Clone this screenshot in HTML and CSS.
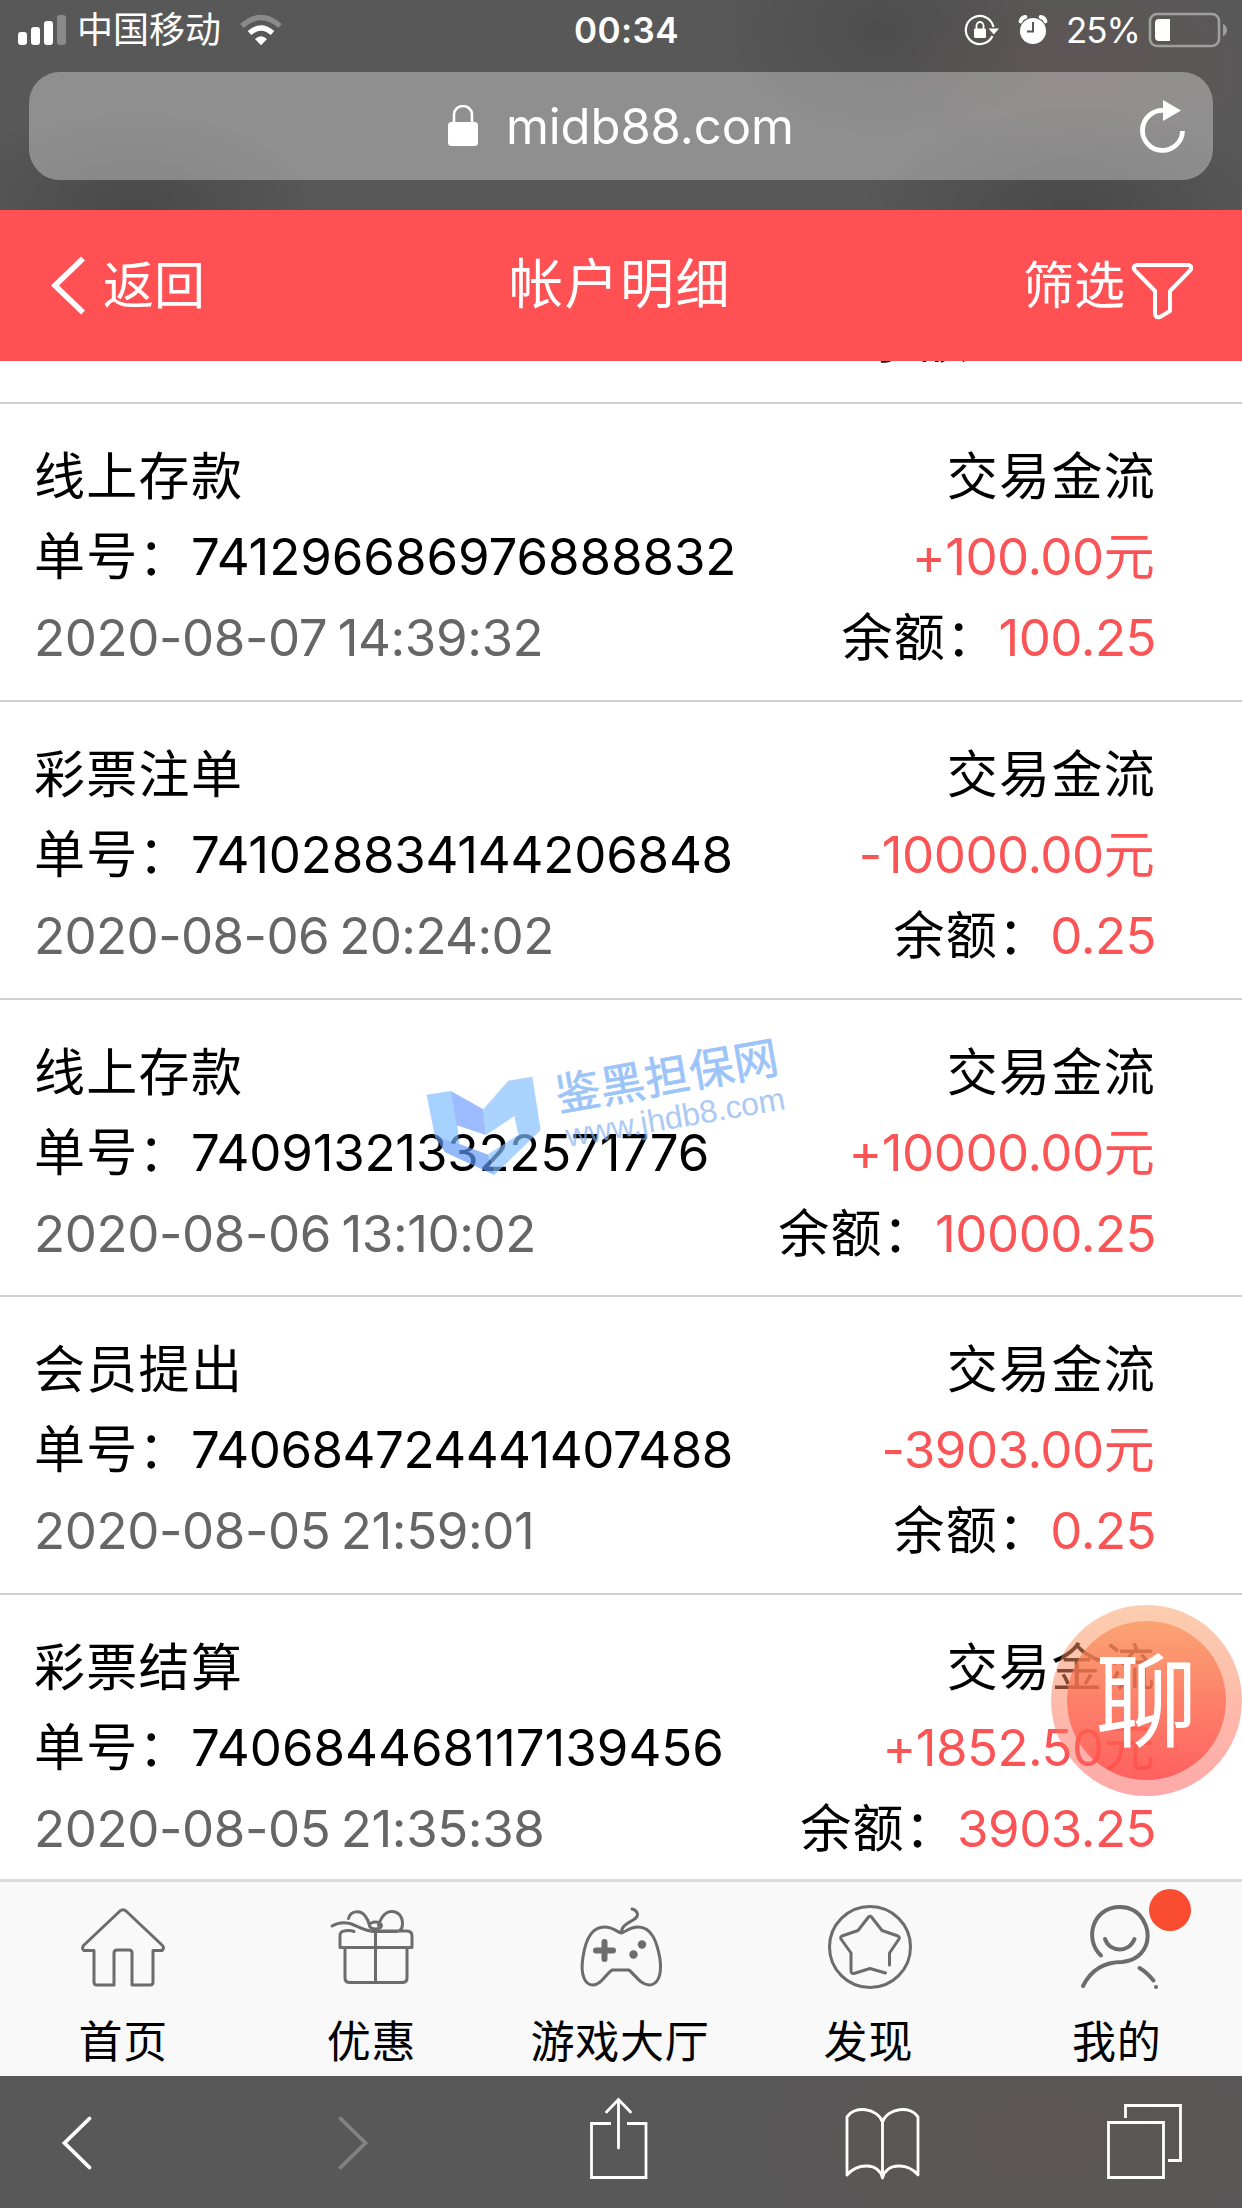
FILE: index.html
```html
<!DOCTYPE html>
<html lang="zh-CN">
<head>
<meta charset="utf-8">
<title>帐户明细</title>
<link rel="stylesheet" href="styles.css">
</head>
<body>
<div class="phone">
  <div class="browser-top">
    <div class="status">
      <div class="status-left">
        <svg width="49" height="32" viewBox="18 14 49 32"><g fill="#fff"><rect x="18" y="32" width="9" height="13" rx="3"/><rect x="31" y="27" width="9" height="18" rx="3"/><rect x="44" y="21" width="9" height="24" rx="3"/><rect x="57" y="15" width="9" height="30" rx="3" opacity=".3"/></g></svg>
        <span class="carrier">中国移动</span>
        <svg class="wifi" width="44" height="32" viewBox="239 14 44 32"><g fill="none" stroke="#fff" stroke-width="5.4"><path d="M242 26Q261 9 280 26" opacity=".3"/><path d="M249.500 33Q261 23 272.500 33"/></g><path d="M255 39q6-5.500 12 0l-6 6.300z" fill="#fff"/></svg>
      </div>
      <span class="clock">00:34</span>
      <div class="status-right">
        <svg width="36" height="32" viewBox="964 14 36 32"><path d="M992.500 36A14 14 0 1 1 993.500 27" fill="none" stroke="#fff" stroke-width="2.200"/><path d="M988.500 28.500h10.500l-5.200 6z" fill="#fff"/><rect x="974" y="28.500" width="12" height="9.500" rx="1.200" fill="#fff"/><path d="M976.500 29v-3.500a3.500 3.500 0 0 1 7 0V29" fill="none" stroke="#fff" stroke-width="1.800"/></svg>
        <svg class="alarm" width="30" height="32" viewBox="1018 14 30 32"><circle cx="1033" cy="31" r="13" fill="#fff"/><path d="M1020.500 21.500q1-4 5-4.500M1045.500 21.500q-1-4-5-4.500" stroke="#fff" stroke-width="3.800" stroke-linecap="round"/><path d="M1033 22v9.500h-6" fill="none" stroke="#5b5655" stroke-width="2"/></svg>
        <span class="percent">25%</span>
        <svg class="battery" width="80" height="36" viewBox="1148 12 80 36"><rect x="1150" y="14" width="69" height="32" rx="7" fill="none" stroke="#a09f9f" stroke-width="2.600"/><path d="M1223 24q4 2 4 6t-4 6z" fill="#a09f9f"/><path d="M1158 19h12v22h-12q-3-.5-3-4V23q0-3.500 3-4z" fill="#fff"/></svg>
      </div>
    </div>
    <div class="address">
      <svg class="lock" width="30" height="42" viewBox="448 104 30 42"><rect x="448" y="121" width="30" height="24" rx="3.500" fill="#fff"/><path d="M454 122v-8.500a9 8.500 0 0 1 18 0V122" fill="none" stroke="#fff" stroke-width="2.600"/></svg>
      <span class="domain">midb88.com</span>
      <svg class="reload" width="46" height="54" viewBox="1140 99 46 54"><path d="M1164 110.500A20 20 0 1 0 1182.500 131" fill="none" stroke="#fff" stroke-width="4.800"/><path d="M1163 100v21l18-10.500z" fill="#fff"/></svg>
    </div>
  </div>

  <header class="page-head">
    <a class="back"><svg width="34" height="60" viewBox="51 256 34 60"><path d="M83 258.500L55 285.500 83 312.500" fill="none" stroke="#fff" stroke-width="5.600"/></svg><span>返回</span></a>
    <h1>帐户明细</h1>
    <a class="filter"><span>筛选</span><svg width="62" height="58" viewBox="1131 263 62 58"><path d="M1137 266h51q5 1 2.500 5L1170 292v20l-10 6q-4 1-5-2.500V292L1134.500 271q-2.500-4 2.500-5z" fill="none" stroke="#fff" stroke-width="4" stroke-linejoin="round"/></svg></a>
  </header>

  <main class="list">
    <div class="scrolled"><p><i>余额：</i></p></div>
    <section class="row"><div><p><i>线上存款</i></p><p class="tight"><i>单号：</i>741296686976888832</p><p class="date">2020-08-07 14:39:32</p></div><div class="money"><p><i>交易金流</i></p><p class="red">+100.00<i>元</i></p><p><i>余额：</i><b>100.25</b></p></div></section>
    <section class="row"><div><p><i>彩票注单</i></p><p class="tighter"><i>单号：</i>741028834144206848</p><p class="date tight">2020-08-06 20:24:02</p></div><div class="money"><p><i>交易金流</i></p><p class="red">-10000.00<i>元</i></p><p><i>余额：</i><b>0.25</b></p></div></section>
    <section class="row"><div><p><i>线上存款</i></p><p class="tighter"><i>单号：</i>740913213322571776</p><p class="date">2020-08-06 13:10:02</p></div><div class="money"><p><i>交易金流</i></p><p class="red">+10000.00<i>元</i></p><p><i>余额：</i><b>10000.25</b></p></div></section>
    <section class="row"><div><p><i>会员提出</i></p><p class="tightest"><i>单号：</i>740684724441407488</p><p class="date">2020-08-05 21:59:01</p></div><div class="money"><p><i>交易金流</i></p><p class="red">-3903.00<i>元</i></p><p><i>余额：</i><b>0.25</b></p></div></section>
    <section class="row"><div><p><i>彩票结算</i></p><p><i>单号：</i>740684468117139456</p><p class="date">2020-08-05 21:35:38</p></div><div class="money"><p><i>交易金流</i></p><p class="red">+1852.50<i>元</i></p><p><i>余额：</i><b>3903.25</b></p></div></section>
  </main>

  <nav class="tabs">
    <a><svg width="88" height="88" viewBox="80 1903 88 88"><path d="M94 1950.500H84q-2.500-2-.5-5L120 1911q3-2.500 6 0L162.500 1945.500q2 3-.5 5H153V1982q0 3-3 3H132V1953q0-3-3-3H117q-3 0-3 3v32H97q-3 0-3-3z"/></svg><span>首页</span></a>
    <a><svg width="88" height="88" viewBox="329 1903 88 88"><path d="M354 1931.500Q350 1930 344 1931q-4 .5-4 5v11.500h72V1936q0-5-5-5H376M345 1948v30q0 4.500 5 4.500h52q5 0 5-4.500v-30M375.500 1931v51M332 1926q8-5 18-2.500c8 2.500 14 8 25 8h22q6-1 5.500-9c-1-12-14-15-20.500-5q-2 3-3.500 8M348.500 1918.500c2-8 12-9 17-2q3 4 4 9"/><ellipse cx="375.500" cy="1925.500" rx="6" ry="3.500"/></svg><span>优惠</span></a>
    <a><svg width="88" height="88" viewBox="577 1903 88 88"><path d="M621.500 1933c-5-1-8-6-17-6-13 0-19 13-21.500 30-3 18 2 28 10 28 9-1 11-9 19-15h17c7 6 11 14 20 15 9 0 13-10 11-26-3-17-8-32-22-32-9 0-12 5-16.500 6zM621.500 1932c0-10 17-11 16-18q-1-4-5.500-5"/><path d="M604.500 1942v17M596 1950.500h17" stroke-width="6"/><g class="dot"><circle cx="633.500" cy="1954.500" r="4.200"/><circle cx="642" cy="1944.500" r="4.200"/></g></svg><span>游戏大厅</span></a>
    <a><svg width="88" height="88" viewBox="825 1903 88 88"><circle cx="870" cy="1947" r="40.500"/><path d="M885.500 1973L870 1968.500 854 1973.500q-3 .5-3-3V1953L841 1939q-1-2 1-3L858 1930.500 868.500 1917q1.500-1.500 3 0L882 1930.500 898 1936q2 1 1 3L889.500 1953v12"/></svg><span>发现</span></a>
    <a><svg width="88" height="88" viewBox="1074 1903 88 88"><g stroke-width="4"><path d="M1101 1955.500C1084 1940 1092 1907 1120 1907c22 0 30 22 27 35-3 12-13 19-25 20-19 0-31 8-39 24M1105 1939c5 14 24 14 29.500 0M1139.500 1968q7 4 14 12.500"/><path d="M1156 1987v0"/></g></svg><em></em><span>我的</span></a>
  </nav>

  <footer class="toolbar">
    <svg viewBox="0 2076 1242 132" width="1242" height="132" fill="none" stroke="#fff" stroke-width="3.800" stroke-linecap="round">
      <path d="M89.500 2118.500L64.500 2143 89.500 2167.500"/>
      <path d="M340.500 2118.500L365.500 2143 340.500 2167.500" stroke="#828282"/>
      <path d="M618.500 2148v-47M606.500 2112l12-12.500 12 12.500" stroke-width="2.800"/>
      <path d="M611 2123.500H591.500v54h54.500v-54H627" stroke-width="2.800" stroke-linecap="butt"/>
      <path d="M882.500 2178V2122C878 2108 854 2105 847 2117v58c10-12 32-13 35.500 3 3.500-16 26-15 35.500-3v-58c-7-12-31-9-35.500 5" stroke-width="2.800" stroke-linejoin="round"/>
      <path d="M1108.500 2122.500h55v55h-55zM1125.500 2118v-12.500H1180.500v55h-12.500" stroke-width="2.800" stroke-linecap="butt"/>
    </svg>
  </footer>

  <svg class="watermark" width="420" height="180" viewBox="0 0 1260 540">
    <path d="M80 224L152 213 172 318 178 375 133 385 105 350z" fill="#7cbcff"/>
    <path d="M152 213L250 268 258 345 170 316z" fill="#6f9dff"/>
    <path d="M250 268L325 182 397 170 422 330 283 465 265 402 355 345 343 288 258 345z" fill="#84bfff"/>
    <path d="M105 350L178 372 265 404 283 465 135 397z" fill="#5f9af8"/>
    <g transform="rotate(-10 480 285)"><text class="wm-name" x="478" y="274" textLength="676">鉴黑担保网</text></g>
    <g transform="rotate(-9.800 500 380)"><text class="wm-url" x="503" y="381" textLength="666">www.jhdb8.com</text></g>
  </svg>
  <div class="chat"><span>聊</span></div>
</div>
</body>
</html>
```
FILE: styles.css
```css
* { box-sizing: border-box; }
body { margin: 0; background: #fff; font-family: Inter, "Noto Sans CJK SC", sans-serif; }
p, h1 { margin: 0; font-weight: 400; }
i, b, em { font-style: normal; font-weight: 400; }
svg { display: block; flex: none; }
.phone { position: relative; width: 1242px; height: 2208px; display: flex; flex-direction: column; overflow: hidden; }

.browser-top {
  height: 210px; color: #fff; display: flex; flex-direction: column;
  background:
    radial-gradient(ellipse 190px 100px at 135px 205px, rgba(0,0,0,.17), transparent),
    radial-gradient(ellipse 210px 100px at 1070px 205px, rgba(0,0,0,.17), transparent),
    radial-gradient(ellipse 170px 120px at 880px 30px, rgba(0,0,0,.12), transparent),
    radial-gradient(ellipse 190px 100px at 1080px 70px, rgba(130,70,70,.17), transparent),
    #585858;
}
.status { height: 72px; padding: 0 14px 12px 18px; display: grid; grid-template-columns: 1fr auto 1fr; align-items: center; }
.status-left, .status-right { display: flex; align-items: center; }
.status-right { justify-content: flex-end; }
.carrier { margin-left: 10px; font-size: 36px; line-height: 60px; }
.wifi { margin-left: 18px; }
.clock { font-size: 35px; font-weight: 600; letter-spacing: .4px; line-height: 60px; padding: 0 0 0 7px; }
.alarm { margin-left: 18px; }
.percent { margin: 0 8px 0 18px; font-size: 35px; line-height: 60px; letter-spacing: -1px; }
.address { margin: 0 29px; height: 108px; border-radius: 31px; background: rgba(255,255,255,.335); display: flex; align-items: center; padding: 0 27px 0 419px; }
.lock { margin-top: -1px; }
.domain { margin-left: 28px; font-size: 49px; letter-spacing: -.1px; }
.reload { margin-left: auto; }

.page-head { height: 151px; background: #ff5153; color: #fff; display: grid; grid-template-columns: 1fr auto 1fr; align-items: center; padding: 0 49px 0 51px; font-size: 51px; }
.page-head h1 { font-size: 54px; letter-spacing: 1.5px; line-height: 76px; padding: 0 4px 1px 0; }
.back, .filter { display: flex; align-items: center; line-height: 76px; }
.back span { margin-left: 18px; }
.filter { justify-content: flex-end; }
.filter span { margin-right: 6px; }
.filter svg { margin-top: 10px; }

.list { height: 1518px; overflow: hidden; color: #000; font-size: 51px; line-height: 81px; }
.list i { letter-spacing: 1.3px; }
.scrolled { height: 41px; overflow: hidden; padding-left: 864px; }
.scrolled p { margin-top: -62px; }
.row { height: 297.75px; border-top: 2px solid #cfcfcf; padding: 31px 86px 0 34px; display: flex; justify-content: space-between; white-space: nowrap; }
.row p:first-child { position: relative; top: 1px; }
.money { text-align: right; }
.row .date { color: #666; letter-spacing: -.4px; word-spacing: -3.5px; }
.row .tight { letter-spacing: -.08px; }
.row .tighter { letter-spacing: -.22px; }
.row .tightest { letter-spacing: -.5px; }
.row .date.tight { letter-spacing: -.6px; }
.red, .list b { color: #fb5456; letter-spacing: -.5px; }

.tabs { height: 197px; background: #f9f9f9; border-top: 3px solid #dcdcdc; display: grid; grid-template-columns: repeat(5, 1fr); }
.tabs a { position: relative; display: flex; flex-direction: column; align-items: center; padding-top: 21px; font-size: 44px; letter-spacing: .8px; line-height: 60px; }
.tabs svg { fill: none; stroke: #6c6c6c; stroke-width: 3; stroke-linecap: round; stroke-linejoin: round; margin-bottom: 21px; }
.tabs span { margin-right: 2px; }
.tabs .dot { fill: #6c6c6c; stroke: none; }
.tabs em { position: absolute; left: 155px; top: 7px; width: 42px; height: 42px; border-radius: 50%; background: #fa4c31; }

.toolbar { height: 132px; background: radial-gradient(ellipse 330px 200px at 1040px 66px, rgba(120,70,70,.15), transparent), #585858; }

.watermark { position: absolute; left: 400px; top: 1020px; opacity: .68; }
.wm-name { font: 400 134px "Noto Sans CJK SC", sans-serif; fill: #6fa9f5; stroke: #6fa9f5; stroke-width: 2; }
.wm-url { font: 96px "Liberation Sans", sans-serif; fill: #84b0f0; }

.chat { position: absolute; left: 1051px; top: 1605px; width: 191px; height: 191px; border-radius: 50%; display: grid; place-items: center; background: linear-gradient(rgba(250,160,100,.52), rgba(252,90,90,.52)); }
.chat::before { content: ""; grid-area: 1 / 1; width: 159px; height: 159px; border-radius: 50%; background: linear-gradient(rgba(249,145,88,.68), rgba(255,75,75,.78)); }
.chat span { grid-area: 1 / 1; position: relative; top: 1px; color: #fff; font-size: 102px; font-weight: 400; line-height: 150px; }
```
